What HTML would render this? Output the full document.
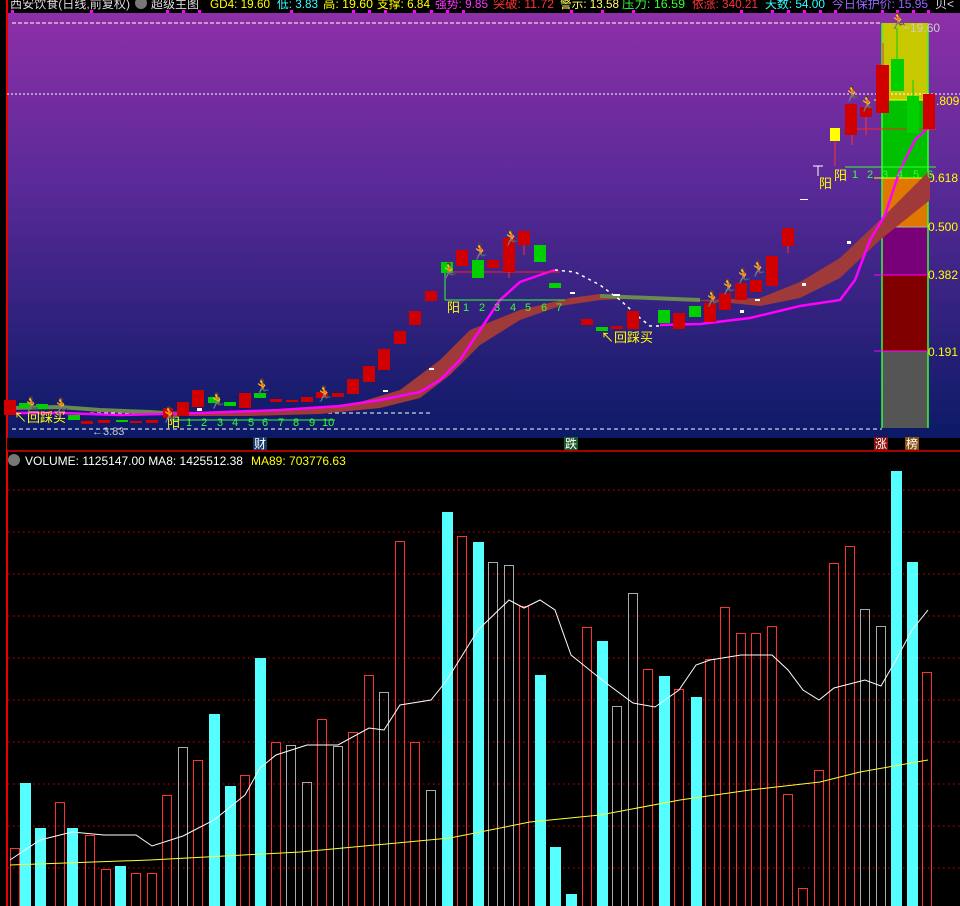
<!DOCTYPE html>
<html><head><meta charset="utf-8"><style>
html,body{margin:0;padding:0;background:#000;width:960px;height:906px;overflow:hidden}
svg{display:block}
text{font-family:"Liberation Sans","Noto Sans CJK SC",sans-serif}
</style></head><body>
<svg width="960" height="906" viewBox="0 0 960 906" xmlns="http://www.w3.org/2000/svg">
<defs>
<linearGradient id="bg" x1="0" y1="0" x2="0" y2="1">
<stop offset="0" stop-color="#8e2fa8"/><stop offset="0.4" stop-color="#5a2a98"/><stop offset="1" stop-color="#0b1a66"/>
</linearGradient>
</defs>
<rect x="0" y="0" width="960" height="906" fill="#000"/>
<rect x="7" y="13" width="953" height="425" fill="url(#bg)"/>
<!-- header -->
<g font-size="12" lengthAdjust="spacingAndGlyphs">
<text x="10" y="8" fill="#ddd" textLength="120" lengthAdjust="spacingAndGlyphs">西安饮食(日线,前复权)</text>
<circle cx="141" cy="3" r="6" fill="#777"/>
<text x="151" y="8" fill="#ddd" textLength="48" lengthAdjust="spacingAndGlyphs">超级主图</text>
<text x="210" y="8" fill="#ffff00" textLength="60" lengthAdjust="spacingAndGlyphs">GD4: 19.60</text>
<text x="277" y="8" fill="#33ffff" textLength="41" lengthAdjust="spacingAndGlyphs">低: 3.83</text>
<text x="323" y="8" fill="#ffff00" textLength="50" lengthAdjust="spacingAndGlyphs">高: 19.60</text>
<text x="377" y="8" fill="#ffff00" textLength="53" lengthAdjust="spacingAndGlyphs">支撑: 6.84</text>
<text x="435" y="8" fill="#ff33ff" textLength="53" lengthAdjust="spacingAndGlyphs">强势: 9.85</text>
<text x="493" y="8" fill="#ff3333" textLength="61" lengthAdjust="spacingAndGlyphs">突破: 11.72</text>
<text x="560" y="8" fill="#ffff66" textLength="59" lengthAdjust="spacingAndGlyphs">警示: 13.58</text>
<text x="622" y="8" fill="#33ff33" textLength="63" lengthAdjust="spacingAndGlyphs">压力: 16.59</text>
<text x="692" y="8" fill="#ff3333" textLength="66" lengthAdjust="spacingAndGlyphs">依涨: 340.21</text>
<text x="765" y="8" fill="#33ffff" textLength="60" lengthAdjust="spacingAndGlyphs">天数: 54.00</text>
<text x="832" y="8" fill="#9966ff" textLength="96" lengthAdjust="spacingAndGlyphs">今日保护价: 15.95</text>
<text x="935" y="8" fill="#ddd">贝&lt;</text>
</g>
<g fill="#ff00ff">
<rect x="11" y="10" width="3" height="3"/><rect x="90" y="10" width="3" height="3"/><rect x="166" y="10" width="3" height="3"/><rect x="182" y="10" width="3" height="3"/><rect x="198" y="10" width="3" height="3"/><rect x="290" y="10" width="3" height="3"/><rect x="352" y="10" width="3" height="3"/><rect x="368" y="10" width="3" height="3"/><rect x="384" y="10" width="3" height="3"/><rect x="413" y="10" width="3" height="3"/><rect x="430" y="10" width="3" height="3"/><rect x="446" y="10" width="3" height="3"/><rect x="462" y="10" width="3" height="3"/><rect x="570" y="10" width="3" height="3"/><rect x="601" y="10" width="3" height="3"/><rect x="632" y="10" width="3" height="3"/><rect x="740" y="10" width="3" height="3"/><rect x="771" y="10" width="3" height="3"/><rect x="787" y="10" width="3" height="3"/><rect x="803" y="10" width="3" height="3"/><rect x="819" y="10" width="3" height="3"/><rect x="834" y="10" width="3" height="3"/><rect x="881" y="10" width="3" height="3"/><rect x="896" y="10" width="3" height="3"/><rect x="912" y="10" width="3" height="3"/><rect x="927" y="10" width="3" height="3"/>
</g>
<rect x="6" y="0" width="2" height="906" fill="#e00"/>
<!-- fib box -->
<rect x="882" y="23" width="46" height="77" fill="#c8c800"/>
<rect x="882" y="100" width="46" height="78" fill="#00c000"/>
<rect x="882" y="178" width="46" height="49" fill="#e07800"/>
<rect x="882" y="227" width="46" height="48" fill="#780078"/>
<rect x="882" y="275" width="46" height="76" fill="#800000"/>
<rect x="882" y="351" width="46" height="77" fill="#555"/>
<g stroke="#33ff33" stroke-width="1.5"><line x1="882" y1="23" x2="882" y2="428"/><line x1="928" y1="23" x2="928" y2="428"/></g>
<line x1="874" y1="100" x2="928" y2="100" stroke="#ffff00"/>
<line x1="874" y1="178" x2="928" y2="178" stroke="#ffff00"/>
<line x1="874" y1="227" x2="928" y2="227" stroke="#aaa"/>
<line x1="874" y1="275" x2="928" y2="275" stroke="#ff00ff"/>
<line x1="874" y1="351" x2="928" y2="351" stroke="#ff00ff"/>
<g font-size="12" fill="#ffff00">
<text x="936" y="105">.809</text><text x="928" y="182">0.618</text><text x="928" y="231">0.500</text><text x="928" y="279">0.382</text><text x="928" y="356">0.191</text>
</g>
<text x="903" y="32" font-size="12" fill="#ccc">~19.60</text>
<!-- dashed lines -->
<line x1="12" y1="23" x2="882" y2="23" stroke="#fff" stroke-dasharray="4,2"/>
<line x1="7" y1="94" x2="960" y2="94" stroke="#fff" stroke-dasharray="2,2"/>
<line x1="12" y1="429" x2="882" y2="429" stroke="#fff" stroke-dasharray="4,3"/>
<line x1="90" y1="413" x2="430" y2="413" stroke="#fff" stroke-dasharray="4,3"/>
<!-- brown band -->
<path d="M170 414 L300 410 L360 402 L400 390 L440 360 L470 330 L520 310 L570 298 L600 294 L640 296 L700 300 L760 298 L800 282 L840 258 L880 220 L930 170 L930 200 L880 240 L840 278 L800 298 L760 306 L720 302 L640 298 L600 300 L560 306 L520 320 L480 345 L450 375 L420 398 L380 408 L320 414 L250 416 L180 416 Z" fill="#a03a3a"/>
<path d="M10 408 L60 407 L100 410 L150 412 L180 414" stroke="#6a8a50" stroke-width="4" fill="none"/>
<path d="M600 296 L700 300" stroke="#6a8a50" stroke-width="4" fill="none"/>
<!-- magenta -->
<path d="M10 413 L60 413 L120 415 L200 413 L280 410 L340 406 L380 400 L420 392 L440 380 L460 360 L480 330 L500 300 L520 282 L540 275 L555 270" stroke="#ff00ff" stroke-width="2.5" fill="none"/>
<path d="M555 270 L575 272 L600 285 L620 300 L640 318 L650 326 L660 326" stroke="#fff" stroke-width="1.5" stroke-dasharray="3,4" fill="none"/>
<path d="M660 325 L700 324 L750 318 L800 306 L840 300 L855 280 L870 240 L885 215 L900 170 L915 140 L928 128" stroke="#ff00ff" stroke-width="2.5" fill="none"/>
<!-- green count lines -->
<line x1="445" y1="300" x2="565" y2="300" stroke="#33ff33"/>
<line x1="445" y1="272" x2="445" y2="300" stroke="#33ff33"/>
<line x1="170" y1="420" x2="335" y2="420" stroke="#33ff33"/>
<line x1="845" y1="167" x2="936" y2="167" stroke="#33ff33"/>
<line x1="445" y1="272" x2="560" y2="272" stroke="#ff2020"/>
<line x1="845" y1="129" x2="936" y2="129" stroke="#ff2020"/>
<g font-size="11" fill="#33ff33">
<text x="463" y="311">1</text><text x="479" y="311">2</text><text x="494" y="311">3</text><text x="510" y="311">4</text><text x="525" y="311">5</text><text x="541" y="311">6</text><text x="556" y="311">7</text>
<text x="186" y="426">1</text><text x="201" y="426">2</text><text x="217" y="426">3</text><text x="232" y="426">4</text><text x="248" y="426">5</text><text x="262" y="426">6</text><text x="278" y="426">7</text><text x="293" y="426">8</text><text x="309" y="426">9</text><text x="322" y="426">10</text>
<text x="852" y="178">1</text><text x="867" y="178">2</text><text x="882" y="178">3</text><text x="897" y="178">4</text><text x="913" y="178">5</text><text x="927" y="178">6</text>
</g>
<g font-size="13" fill="#ffff00">
<text x="447" y="312">阳</text><text x="167" y="427">阳</text><text x="834" y="180">阳</text><text x="819" y="188">阳</text>
<text x="14" y="422">↖回踩买</text><text x="601" y="342">↖回踩买</text>
</g>
<text x="92" y="435" font-size="11" fill="#ccc">←3.83</text>
<path d="M813 166 h10 M818 166 v10" stroke="#fff"/>
<!-- candles -->
<g fill="#d00000">
<rect x="4" y="400" width="12" height="15"/><rect x="81" y="421" width="12" height="3"/><rect x="98" y="420" width="12" height="3"/><rect x="130" y="421" width="12" height="2"/><rect x="146" y="420" width="12" height="3"/>
<rect x="163" y="408" width="10" height="10"/><rect x="177" y="402" width="12" height="14"/><rect x="192" y="390" width="12" height="17"/><rect x="239" y="393" width="12" height="15"/><rect x="270" y="399" width="12" height="3"/><rect x="286" y="400" width="12" height="2"/><rect x="301" y="397" width="12" height="5"/><rect x="316" y="392" width="12" height="6"/><rect x="332" y="393" width="12" height="4"/>
<rect x="347" y="379" width="12" height="15"/><rect x="363" y="366" width="12" height="16"/><rect x="378" y="349" width="12" height="21"/><rect x="394" y="331" width="12" height="13"/><rect x="409" y="311" width="12" height="14"/><rect x="425" y="291" width="12" height="10"/>
<rect x="456" y="250" width="12" height="16"/><rect x="487" y="260" width="12" height="8"/><rect x="503" y="238" width="12" height="34"/><rect x="518" y="231" width="12" height="14"/>
<rect x="581" y="319" width="12" height="6"/><rect x="611" y="326" width="12" height="3"/><rect x="627" y="311" width="12" height="18"/><rect x="673" y="313" width="12" height="16"/><rect x="704" y="303" width="12" height="19"/><rect x="719" y="293" width="12" height="17"/><rect x="735" y="283" width="12" height="17"/><rect x="750" y="280" width="12" height="12"/><rect x="766" y="256" width="12" height="30"/><rect x="782" y="228" width="12" height="18"/>
<rect x="845" y="104" width="12" height="31"/><rect x="860" y="107" width="12" height="10"/><rect x="876" y="65" width="13" height="48"/><rect x="923" y="94" width="12" height="35"/>
</g>
<g fill="#00d000">
<rect x="19" y="403" width="12" height="5"/><rect x="36" y="404" width="12" height="5"/><rect x="68" y="415" width="12" height="5"/><rect x="116" y="420" width="12" height="2"/><rect x="208" y="397" width="12" height="6"/><rect x="224" y="402" width="12" height="4"/><rect x="254" y="393" width="12" height="5"/>
<rect x="441" y="262" width="12" height="11"/><rect x="472" y="260" width="12" height="18"/><rect x="534" y="245" width="12" height="17"/><rect x="549" y="283" width="12" height="5"/><rect x="596" y="327" width="12" height="4"/><rect x="658" y="310" width="12" height="13"/><rect x="689" y="306" width="12" height="11"/>
<rect x="891" y="59" width="13" height="32"/><rect x="907" y="96" width="12" height="37"/>
</g>
<rect x="830" y="128" width="10" height="13" fill="#ffff00"/>
<g fill="#fff"><rect x="197" y="408" width="5" height="3"/><rect x="429" y="368" width="5" height="2"/><rect x="383" y="390" width="5" height="2"/><rect x="570" y="292" width="5" height="2"/><rect x="755" y="299" width="5" height="2"/><rect x="800" y="199" width="8" height="1"/><rect x="847" y="241" width="4" height="3"/><rect x="802" y="283" width="4" height="3"/><rect x="740" y="310" width="4" height="3"/><rect x="614" y="294" width="6" height="2"/></g>
<g stroke="#ff3030"><line x1="883" y1="43" x2="883" y2="65"/><line x1="852" y1="135" x2="852" y2="145"/><line x1="835" y1="141" x2="835" y2="166"/><line x1="866" y1="117" x2="866" y2="135"/><line x1="509" y1="272" x2="509" y2="278"/><line x1="524" y1="245" x2="524" y2="255"/><line x1="788" y1="246" x2="788" y2="253"/></g>
<g stroke="#00d000"><line x1="897" y1="28" x2="897" y2="59"/><line x1="913" y1="80" x2="913" y2="96"/></g>
<!-- runners -->
<g font-size="15" fill="#f0b060">
<text x="22" y="410">🏃</text><text x="52" y="411">🏃</text><text x="160" y="420">🏃</text><text x="208" y="406">🏃</text><text x="253" y="392">🏃</text><text x="315" y="399">🏃</text><text x="440" y="276">🏃</text><text x="471" y="257">🏃</text><text x="502" y="243">🏃</text><text x="703" y="304">🏃</text><text x="719" y="292">🏃</text><text x="734" y="281">🏃</text><text x="749" y="274">🏃</text><text x="843" y="99">🏃</text><text x="858" y="109">🏃</text><text x="889" y="26">🏃</text>
</g>
<!-- strip -->
<rect x="7" y="438" width="953" height="13" fill="#000"/>
<rect x="253" y="437" width="14" height="13" fill="#1a3a6a"/><text x="254" y="448" font-size="12" fill="#fff">财</text>
<rect x="564" y="437" width="14" height="13" fill="#1a5a2a"/><text x="565" y="448" font-size="12" fill="#fff">跌</text>
<rect x="874" y="437" width="14" height="13" fill="#8a1010"/><text x="875" y="448" font-size="12" fill="#fff">涨</text>
<rect x="905" y="437" width="14" height="13" fill="#8a5010"/><text x="906" y="448" font-size="12" fill="#fff">榜</text>
<line x1="7" y1="451" x2="960" y2="451" stroke="#d00" stroke-width="1.5"/>
<!-- volume panel -->
<circle cx="14" cy="460" r="6" fill="#777"/>
<text x="25" y="465" font-size="12" fill="#fff">VOLUME: 1125147.00  MA8: 1425512.38</text>
<text x="251" y="465" font-size="12" fill="#ffff00">MA89: 703776.63</text>
<g stroke="#d00" stroke-dasharray="1.5,3.5">
<line x1="8" y1="490" x2="960" y2="490"/><line x1="8" y1="532" x2="960" y2="532"/><line x1="8" y1="574" x2="960" y2="574"/><line x1="8" y1="616" x2="960" y2="616"/><line x1="8" y1="658" x2="960" y2="658"/><line x1="8" y1="700" x2="960" y2="700"/><line x1="8" y1="742" x2="960" y2="742"/><line x1="8" y1="784" x2="960" y2="784"/><line x1="8" y1="826" x2="960" y2="826"/><line x1="8" y1="868" x2="960" y2="868"/>
</g>
<g fill="#55ffff">
<rect x="20" y="783" width="11" height="123"/><rect x="35" y="828" width="11" height="78"/><rect x="67" y="828" width="11" height="78"/><rect x="115" y="866" width="11" height="40"/><rect x="209" y="714" width="11" height="192"/><rect x="225" y="786" width="11" height="120"/><rect x="255" y="658" width="11" height="248"/>
<rect x="442" y="512" width="11" height="394"/><rect x="473" y="542" width="11" height="364"/><rect x="535" y="675" width="11" height="231"/><rect x="550" y="847" width="11" height="59"/><rect x="566" y="894" width="11" height="12"/><rect x="597" y="641" width="11" height="265"/><rect x="659" y="676" width="11" height="230"/><rect x="691" y="697" width="11" height="209"/><rect x="891" y="471" width="11" height="435"/><rect x="907" y="562" width="11" height="344"/>
</g>
<g fill="none" stroke="#ff3030">
<rect x="10.5" y="848.5" width="9" height="60"/><rect x="55.5" y="802.5" width="9" height="110"/><rect x="85.5" y="835.5" width="9" height="80"/><rect x="101.5" y="869.5" width="9" height="40"/><rect x="131.5" y="873.5" width="9" height="40"/><rect x="147.5" y="873.5" width="9" height="40"/><rect x="162.5" y="795.5" width="9" height="120"/><rect x="193.5" y="760.5" width="9" height="150"/><rect x="240.5" y="775.5" width="9" height="140"/><rect x="271.5" y="742.5" width="9" height="170"/><rect x="317.5" y="719.5" width="9" height="190"/><rect x="348.5" y="732.5" width="9" height="180"/><rect x="364.5" y="675.5" width="9" height="240"/><rect x="395.5" y="541.5" width="9" height="370"/><rect x="410.5" y="742.5" width="9" height="170"/><rect x="457.5" y="536.5" width="9" height="380"/><rect x="519.5" y="606.5" width="9" height="300"/><rect x="582.5" y="627.5" width="9" height="290"/><rect x="643.5" y="669.5" width="9" height="240"/><rect x="674.5" y="689.5" width="9" height="220"/><rect x="705.5" y="659.5" width="9" height="250"/><rect x="720.5" y="607.5" width="9" height="300"/><rect x="736.5" y="633.5" width="9" height="280"/><rect x="751.5" y="633.5" width="9" height="280"/><rect x="767.5" y="626.5" width="9" height="280"/><rect x="783.5" y="794.5" width="9" height="120"/><rect x="798.5" y="888.5" width="9" height="30"/><rect x="814.5" y="770.5" width="9" height="140"/><rect x="829.5" y="563.5" width="9" height="350"/><rect x="845.5" y="546.5" width="9" height="360"/><rect x="922.5" y="672.5" width="9" height="240"/>
</g>
<g fill="none" stroke="#aaa">
<rect x="178.5" y="747.5" width="9" height="170"/><rect x="286.5" y="745.5" width="9" height="170"/><rect x="302.5" y="782.5" width="9" height="130"/><rect x="333.5" y="746.5" width="9" height="170"/><rect x="379.5" y="692.5" width="9" height="220"/><rect x="426.5" y="790.5" width="9" height="120"/><rect x="488.5" y="562.5" width="9" height="350"/><rect x="504.5" y="565.5" width="9" height="350"/><rect x="612.5" y="706.5" width="9" height="200"/><rect x="628.5" y="593.5" width="9" height="320"/><rect x="860.5" y="609.5" width="9" height="300"/><rect x="876.5" y="626.5" width="9" height="290"/>
</g>
<path d="M10 860 L40 840 L72 832 L104 835 L136 835 L152 846 L183 836 L214 820 L245 795 L260 768 L276 755 L307 745 L338 745 L369 728 L384 730 L400 705 L431 700 L447 680 L478 630 L509 600 L524 608 L540 600 L555 610 L571 655 L602 680 L633 703 L655 707 L679 690 L696 665 L710 660 L741 655 L772 655 L788 670 L803 690 L819 700 L834 688 L865 680 L881 686 L896 660 L912 630 L928 610" stroke="#fff" fill="none"/>
<path d="M10 865 L150 860 L300 852 L450 838 L530 822 L600 815 L680 800 L750 790 L820 782 L860 772 L928 760" stroke="#ffff33" fill="none"/>
</svg>
</body></html>
